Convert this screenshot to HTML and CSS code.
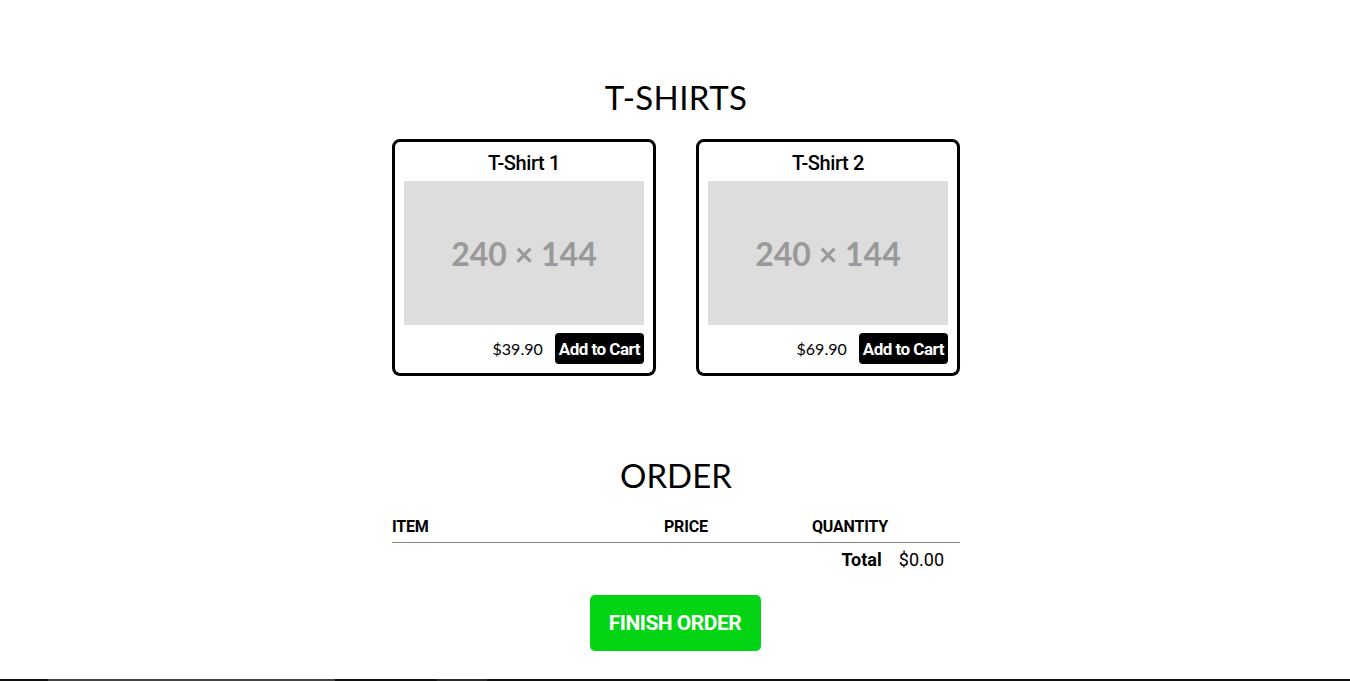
FILE: index.html
```html
<!DOCTYPE html>
<html>
<head>
<meta charset="utf-8">
<link rel="stylesheet" href="styles.css">
</head>
<body>
<main class="page">
  <h2 class="section-title">T-SHIRTS</h2>
  <div class="cards">
    <div class="card">
      <div class="card-title">T-Shirt 1</div>
      <div class="placeholder">240 × 144</div>
      <div class="card-foot">
        <span class="price">$39.90</span>
        <button class="add-btn">Add to Cart</button>
      </div>
    </div>
    <div class="card">
      <div class="card-title">T-Shirt 2</div>
      <div class="placeholder">240 × 144</div>
      <div class="card-foot">
        <span class="price">$69.90</span>
        <button class="add-btn">Add to Cart</button>
      </div>
    </div>
  </div>

  <h2 class="section-title order-title">ORDER</h2>
  <div class="order-table">
    <div class="order-head">
      <span class="col-item">ITEM</span>
      <span class="col-price">PRICE</span>
      <span class="col-qty">QUANTITY</span>
    </div>
    <div class="order-total">
      <span class="total-label">Total</span>
      <span class="total-value">$0.00</span>
    </div>
  </div>
  <div class="finish-wrap">
    <button class="finish-btn">FINISH ORDER</button>
  </div>
</main>
<footer class="bottom-bar">
  <span class="seg seg-a"></span>
  <span class="seg seg-b"></span>
</footer>
</body>
</html>
```

FILE: styles.css
```css
html, body {
  margin: 0;
  padding: 0;
  background: #fff;
}
body {
  font-family: Roboto, "Liberation Sans", sans-serif;
  color: #000;
  height: 681px;
  overflow: hidden;
}
.page {
  width: 568px;
  margin-left: calc(50% - 283px);
  padding-top: 77px;
}
.section-title {
  font-family: Lato, "Open Sans", sans-serif;
  font-weight: 400;
  font-size: 33px;
  line-height: 40px;
  text-align: center;
  margin: 0 0 22px 0;
  letter-spacing: 0.4px;
}
.cards {
  display: flex;
  gap: 40px;
}
.card {
  width: 240px;
  border: 3px solid #000;
  border-radius: 8px;
  padding: 9px;
}
.card-title {
  font-size: 20px;
  font-weight: 500;
  line-height: 24px;
  text-align: center;
  margin-bottom: 6px;
  padding-top: 1px;
  margin-top: -1px;
  letter-spacing: -0.4px;
}
.placeholder {
  width: 240px;
  height: 144px;
  background: #dddddd;
  color: #999999;
  font-family: Lato, sans-serif;
  font-weight: 700;
  font-size: 32px;
  display: flex;
  align-items: center;
  justify-content: center;
}
.card-foot {
  display: flex;
  justify-content: flex-end;
  align-items: center;
  gap: 12px;
  margin-top: 8px;
}
.price {
  font-family: Lato, sans-serif;
  font-size: 16px;
}
.add-btn {
  background: #000;
  color: #fff;
  border: none;
  border-radius: 4px;
  height: 31px;
  padding: 0 4px;
  font-family: Roboto, sans-serif;
  font-weight: 700;
  font-size: 17px;
  letter-spacing: -0.5px;
}
.order-title {
  margin-top: 79px;
  margin-bottom: 15px;
  letter-spacing: 0;
}
.order-head {
  display: grid;
  grid-template-columns: 272px 148px 148px;
  font-size: 16px;
  font-weight: 700;
  line-height: 30px;
  padding-top: 2px;
  border-bottom: 1px solid #888;
  letter-spacing: -0.2px;
}
.order-total {
  display: flex;
  justify-content: flex-end;
  gap: 17px;
  padding-right: 16px;
  padding-top: 1px;
  font-size: 18px;
  line-height: 32px;
}
.total-label {
  font-weight: 700;
}
.finish-wrap {
  display: flex;
  justify-content: center;
  margin-top: 19px;
  margin-left: -2px;
}
.finish-btn {
  width: 171px;
  height: 56px;
  background: #03d413;
  color: #fff;
  border: none;
  border-radius: 5px;
  font-family: Roboto, sans-serif;
  font-weight: 700;
  font-size: 21px;
  letter-spacing: -0.5px;
}
.bottom-bar {
  margin-top: 28px;
  height: 2px;
  background: #111;
  position: relative;
}
.seg {
  position: absolute;
  top: 0;
  height: 2px;
}
.seg-a {
  left: 48px;
  width: 287px;
  background: #444;
}
.seg-b {
  left: 437px;
  width: 50px;
  background: #2a2a2a;
}
```
